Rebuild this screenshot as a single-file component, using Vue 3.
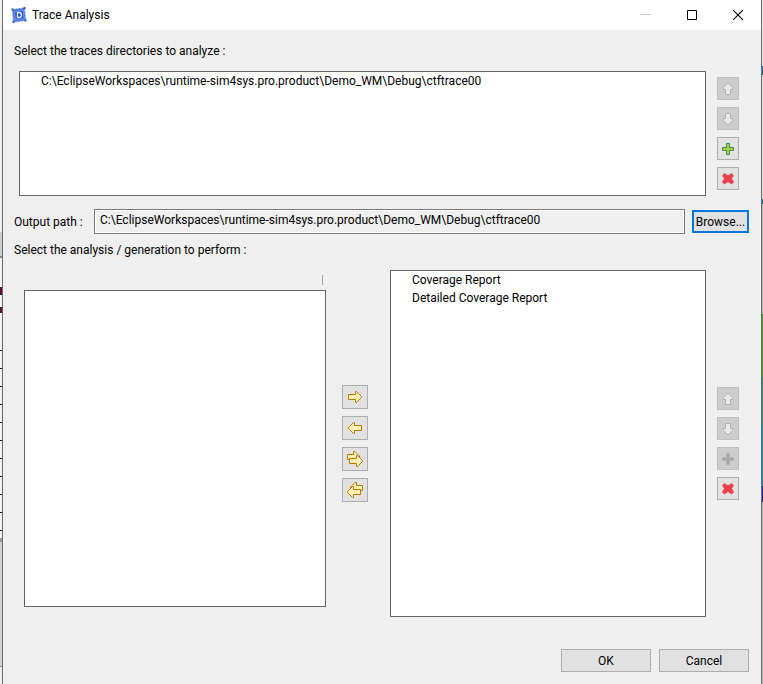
<template>
  <div class="desktop">
    <div class="backdrop backdrop-left"></div>

    <form class="dialog" @submit.prevent>
      <header class="title-bar">
        <svg class="app-icon" width="16" height="16" viewBox="0 0 16 16" aria-hidden="true">
          <path d="M1.5 2.5L13.5 1L14.5 13.5L2.5 15Z" fill="#4a74e0" stroke="#6f8fe4" stroke-dasharray="2 1" />
          <path d="M.5 1.5h2v2h-2zM12.5 0h2v2h-2zM13.5 12.5h2v2h-2zM1.5 14h2v2h-2z" fill="#2450c4" />
          <path d="M3.5 4.5L12 3.5L13 11.5L4.5 12.5Z" fill="#2450c8" stroke="#9ab4f4" stroke-width=".6" />
          <path d="M6.5 5.5H8Q10.5 5.5 10.5 8T8 10.5H6.5Z" fill="none" stroke="#e6eeff" stroke-width="1.3" />
        </svg>
        <h1>Trace Analysis</h1>
        <div class="window-controls">
          <button type="button" aria-label="Minimize" disabled>
            <svg width="10" height="10" viewBox="0 0 10 10"><path d="M0 4.5H10" stroke="#c8c8c8" /></svg>
          </button>
          <button type="button" aria-label="Maximize">
            <svg width="10" height="10" viewBox="0 0 10 10"><path d="M.5 .5H9.5V9.5H.5Z" fill="none" stroke="#000" /></svg>
          </button>
          <button type="button" aria-label="Close">
            <svg width="10" height="10" viewBox="0 0 10 10"><path d="M0 0L10 10M10 0L0 10" stroke="#000" stroke-width="1.1" /></svg>
          </button>
        </div>
      </header>

      <main class="content">
        <label class="section-label" for="traces">Select the traces directories to analyze :</label>
        <div class="traces-row">
          <select id="traces" class="list" multiple>
            <option v-for="trace in traces" :key="trace">{{ trace }}</option>
          </select>
          <div class="tools">
            <button
              v-for="tool in traceTools"
              :key="tool.icon"
              type="button"
              class="tool"
              :aria-label="tool.label"
              :disabled="tool.disabled"
            >
              <svg width="16" height="16" viewBox="0 0 16 16">
                <path v-for="d in icons[tool.icon]" :key="d" :class="['shape', tool.icon]" :d="d" />
              </svg>
            </button>
          </div>
        </div>

        <div class="output-row">
          <label for="output">Output path :</label>
          <input id="output" v-model="outputPath" type="text" readonly />
          <button type="button" class="push browse">Browse...</button>
        </div>

        <label class="section-label analysis-label" for="selected">Select the analysis / generation to perform :</label>
        <div class="analysis-row">
          <div class="available">
            <div class="column-header"></div>
            <select class="list" multiple aria-label="Available analyses"></select>
          </div>

          <div class="transfer">
            <button
              v-for="move in moves"
              :key="move.icon"
              type="button"
              class="tool wide"
              :aria-label="move.label"
            >
              <svg width="16" height="16" viewBox="0 0 16 16">
                <path v-for="d in icons[move.icon]" :key="d" class="shape arrow" :d="d" />
              </svg>
            </button>
          </div>

          <select id="selected" class="list" multiple>
            <option v-for="analysis in analyses" :key="analysis">{{ analysis }}</option>
          </select>

          <div class="tools">
            <button
              v-for="tool in analysisTools"
              :key="tool.icon"
              type="button"
              class="tool"
              :aria-label="tool.label"
              :disabled="tool.disabled"
            >
              <svg width="16" height="16" viewBox="0 0 16 16">
                <path v-for="d in icons[tool.icon]" :key="d" :class="['shape', tool.icon]" :d="d" />
              </svg>
            </button>
          </div>
        </div>

        <footer class="actions">
          <button type="submit" class="push">OK</button>
          <button type="button" class="push">Cancel</button>
        </footer>
      </main>
    </form>

    <div class="backdrop backdrop-right"></div>
  </div>
</template>

<script setup>
import { ref } from 'vue'

const tracePath = 'C:\\EclipseWorkspaces\\runtime-sim4sys.pro.product\\Demo_WM\\Debug\\ctftrace00'

const traces = ref([tracePath])
const outputPath = ref(tracePath)
const analyses = ref(['Coverage Report', 'Detailed Coverage Report'])

const traceTools = [
  { icon: 'up', label: 'Move up', disabled: true },
  { icon: 'down', label: 'Move down', disabled: true },
  { icon: 'add', label: 'Add', disabled: false },
  { icon: 'remove', label: 'Remove', disabled: false },
]

const analysisTools = [
  { icon: 'up', label: 'Move up', disabled: true },
  { icon: 'down', label: 'Move down', disabled: true },
  { icon: 'add', label: 'Add', disabled: true },
  { icon: 'remove', label: 'Remove', disabled: false },
]

const moves = [
  { icon: 'right', label: 'Add selected' },
  { icon: 'left', label: 'Remove selected' },
  { icon: 'allRight', label: 'Add all' },
  { icon: 'allLeft', label: 'Remove all' },
]

// Each icon is a list of outlines, drawn back to front
const icons = {
  up: ['M8 2L12.5 6.5V8.5H10.5V13.5H5.5V8.5H3.5V6.5Z'],
  down: ['M8 14L12.5 9.5V7.5H10.5V2.5H5.5V7.5H3.5V9.5Z'],
  add: ['M6.5 2.5H9.5V6.5H13.5V9.5H9.5V13.5H6.5V9.5H2.5V6.5H6.5Z'],
  remove: ['M4.5 2.5L8 5L11.5 2.5L13.5 4.5L11.5 7.5L13.5 11L11.5 13L8 10.5L4.5 13L2.5 11L4.5 7.5L2.5 4.5Z'],
  right: ['M1.5 5.5H8.5V2.5H9.5L14.5 7.5V8.5L9.5 13.5H8.5V10.5H1.5Z'],
  left: ['M14.5 5.5H7.5V2.5H6.5L1.5 7.5V8.5L6.5 13.5H7.5V10.5H14.5Z'],
  allRight: [
    'M.5 3.5H6.5V.5H8L12.5 5V6.5L8 11.5H6.5V8.5H.5Z',
    'M2.5 7.5H9.5V4.5H10.5L15.5 9.5V10.5L10.5 15.5H9.5V12.5H2.5Z',
  ],
  allLeft: [
    'M15.5 3.5H9.5V.5H8L3.5 5V6.5L8 11.5H9.5V8.5H15.5Z',
    'M13.5 7.5H6.5V4.5H5.5L.5 9.5V10.5L5.5 15.5H6.5V12.5H13.5Z',
  ],
}
</script>

<style>
body {
  margin: 0;
}
</style>

<style scoped>
.desktop {
  display: grid;
  grid-template-columns: 2px 1fr 1px;
  min-height: 100vh;
  font-family: Roboto, "Noto Sans", sans-serif;
  font-size: 12px;
  line-height: 18px;
  color: #000;
}

.backdrop-left {
  background:
    repeating-linear-gradient(transparent 0 17px, #0b1030 17px 18px) 0 333px / 2px 198px no-repeat,
    linear-gradient(#f0f0f0 0 232px, #cfcfcf 232px 256px, #8a8a8a 256px 258px, #f2f2f2 258px 287px, #5a1030 287px 295px, #f2f2f2 295px 307px, #5a1030 307px 313px, #f2f2f2 313px 538px, #9a9a9a 538px 542px, #d0d0d0 542px 666px, #8a8a8a 666px 667px, #f0f0f0 667px);
}

.backdrop-right {
  background: linear-gradient(#e4e4e4 0 66px, #1668a0 66px 75px, #dcdcdc 75px 199px, #1668a0 199px 204px, #b8b8b8 204px 314px, #38a018 314px 378px, #208870 378px 425px, #1088b8 425px 486px, #28209a 486px 502px, #b4b8b8 502px);
}

.dialog {
  display: flex;
  flex-direction: column;
  min-width: 0;
  background: #efefef;
  border: solid #6c6c6c;
  border-width: 0 1px;
}

.title-bar {
  display: flex;
  align-items: center;
  height: 30px;
  padding-left: 8px;
  background: #fff;
}

.app-icon {
  margin-right: 5px;
}

h1 {
  flex: 1;
  margin: 0;
  font-size: 12px;
  font-weight: 400;
}

.window-controls {
  display: flex;
}

.window-controls button {
  display: grid;
  place-items: center;
  width: 46px;
  height: 30px;
  padding: 0;
  background: none;
  border: 0;
}

.content {
  display: flex;
  flex: 1;
  flex-direction: column;
  padding: 12px;
  padding-left: 11px;
}

.section-label {
  align-self: flex-start;
}

.traces-row {
  display: flex;
  gap: 11px;
  height: 125px;
  margin: 11px 10px 13px 5px;
}

.list {
  flex: 1;
  min-width: 0;
  height: 100%;
  box-sizing: border-box;
  margin: 0;
  padding: 0;
  background: #fff;
  border: 1px solid #646464;
  border-radius: 0;
  color: #000;
  font: inherit;
}

.list option {
  padding: 2px 0 2px 21px;
}

.tools,
.transfer {
  display: flex;
  flex-direction: column;
  justify-content: center;
  gap: 7px;
}

.tool {
  display: grid;
  place-items: center;
  width: 22px;
  height: 23px;
  padding: 0;
  background: #e1e1e1;
  border: 1px solid #adadad;
}

.tool.wide {
  width: 26px;
  height: 24px;
}

.tool:disabled {
  background: #ccc;
  border-color: #bfbfbf;
}

.shape {
  fill: #e8e8e8;
  stroke: #b2b2b2;
}

.shape.arrow {
  fill: #fff0b4;
  stroke: #b87808;
}

.shape.add {
  fill: #a4d040;
  stroke: #3c8c4c;
}

.shape.remove {
  fill: #f03c48;
  stroke: #d85058;
}

.tool:disabled .shape.add {
  fill: #a6a6a6;
  stroke: #b0b0b0;
}

.output-row {
  display: flex;
  align-items: center;
  gap: 7px;
}

.output-row label {
  width: 73px;
  white-space: nowrap;
}

.output-row input {
  flex: 1;
  min-width: 0;
  height: 25px;
  box-sizing: border-box;
  margin: 0;
  padding: 0 5px 3px;
  background: #efefef;
  border: 1px solid #7a7a7a;
  box-shadow: inset 0 0 0 1px #fff;
  color: #000;
  font: inherit;
}

.push {
  width: 90px;
  height: 23px;
  padding: 0;
  background: #e1e1e1;
  border: 1px solid #adadad;
  color: #000;
  font: inherit;
}

.browse {
  width: 57px;
  border: 2px solid #0078d7;
}

.analysis-label {
  margin-top: 7px;
}

.analysis-row {
  display: flex;
  flex: 1;
  min-height: 160px;
  margin: 11px 10px 32px 10px;
}

.analysis-row > .list {
  flex: 314 1 0;
  height: auto;
  margin-right: 11px;
}

.available {
  display: flex;
  flex: 302 1 0;
  flex-direction: column;
  min-width: 0;
  margin-bottom: 10px;
}

.column-header {
  height: 10px;
  margin: 5px 3px;
  border-right: 1px solid #a0a0a0;
}

.transfer {
  margin: 0 22px 0 16px;
}

.actions {
  display: flex;
  justify-content: flex-end;
  gap: 8px;
}
</style>
